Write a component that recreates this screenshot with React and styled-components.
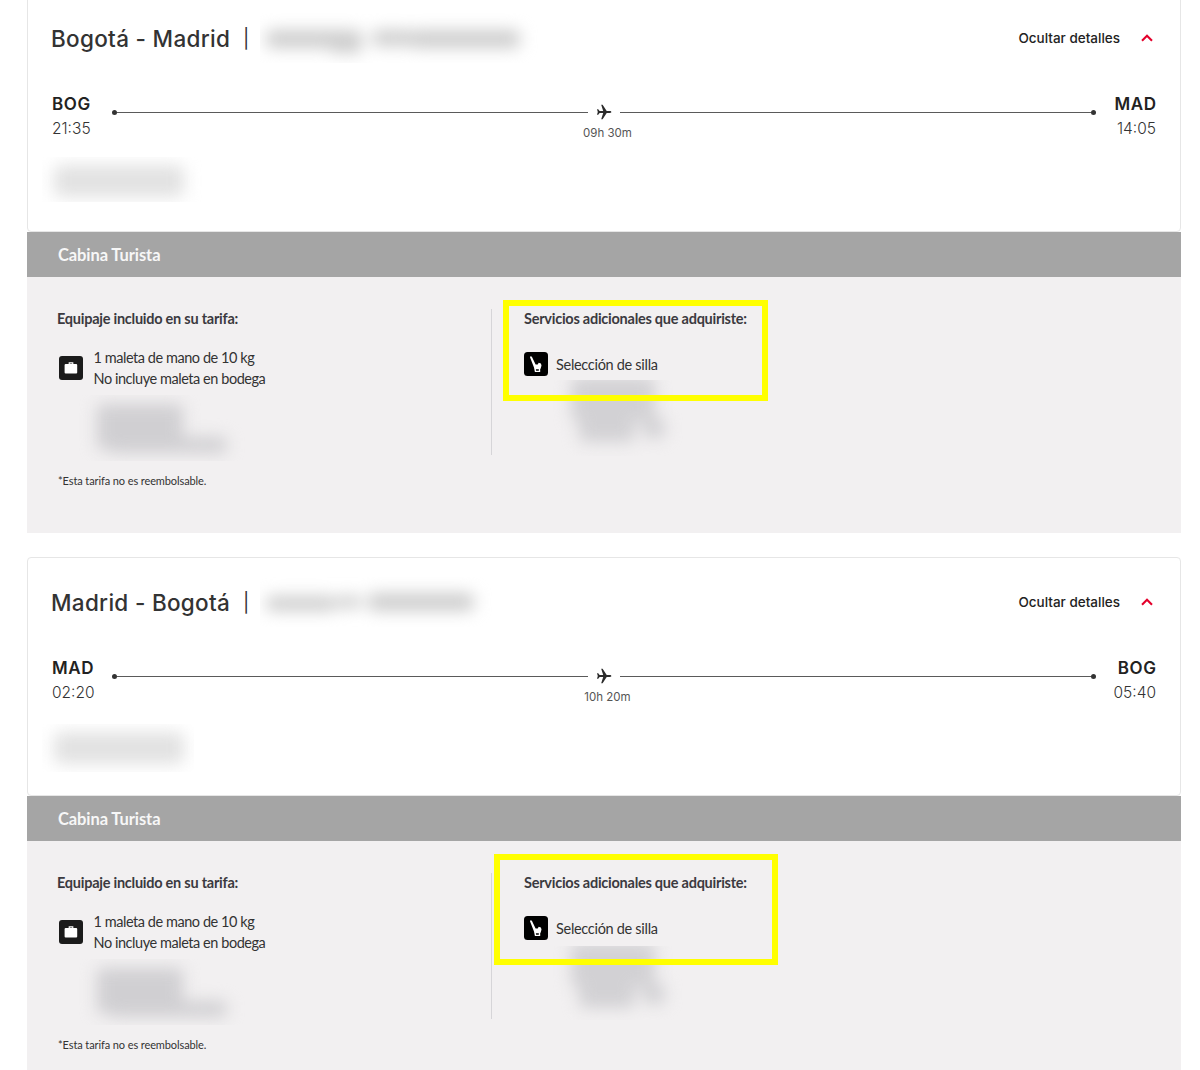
import React from 'react';
import styled, { createGlobalStyle } from 'styled-components';

const flights = [
  {
    title: 'Bogotá - Madrid',
    from: { code: 'BOG', time: '21:35' },
    to: { code: 'MAD', time: '14:05' },
    duration: '09h 30m',
    date: {
      bars: [
        [6, 17, 96, 18],
        [70, 22, 32, 18],
        [112, 17, 40, 16],
        [150, 17, 110, 18],
      ],
    },
    operator: { top: 11, left: -10, width: 160, height: 45 },
    services: { top: 70, height: 76 },
    highlight: { left: 12, top: 23, width: 265, height: 101 },
  },
  {
    title: 'Madrid - Bogotá',
    from: { code: 'MAD', time: '02:20' },
    to: { code: 'BOG', time: '05:40' },
    duration: '10h 20m',
    date: {
      bars: [
        [6, 19, 70, 15],
        [76, 19, 26, 12],
        [108, 16, 106, 18],
      ],
    },
    operator: { top: 14, left: -10, width: 152, height: 48 },
    services: { top: 72, height: 74 },
    highlight: { left: 3, top: 13, width: 284, height: 111 },
  },
];

const Redacted = ({ bars, $tone, ...box }) => (
  <RedactedBox {...box}>
    <Haze>
      {bars.map(([x, y, w, h], i) => (
        <Smudge key={i} $x={x} $y={y} $w={w} $h={h} $tone={$tone} />
      ))}
    </Haze>
  </RedactedBox>
);

const PlaneIcon = () => (
  <svg width="16" height="16" viewBox="0 0 16 16" fill="#2b2b2b">
    <path d="M15.3 8c0-.6-.6-.9-1.4-.9h-3.2L6.6.8H5.2l2 6.3H3.6L2.2 5.2H1L1.8 8 1 10.8h1.2l1.4-1.9h3.6l-2 6.3h1.4l4.1-6.3h3.2c.8 0 1.4-.3 1.4-.9z" />
  </svg>
);

const BagIcon = () => (
  <svg width="24" height="24" viewBox="0 0 24 24">
    <rect width="24" height="24" rx="3" fill="#1b1b1b" />
    <path d="M10.2 8.4V6.9h3.6v1.5" fill="none" stroke="#fff" strokeWidth="1.1" />
    <rect x="5.6" y="8" width="12.6" height="9.6" rx="1" fill="#fff" />
  </svg>
);

const SeatIcon = () => (
  <svg width="24" height="24" viewBox="0 0 24 24">
    <rect width="24" height="24" rx="3.5" fill="#000" />
    <path
      d="M6 5.2C6 4.2 7.4 4 8 5l3.6 7.400 2.100.2 1-1.800 2.200.6.600 2-.8 3.200-.5.3V20h-5.300l-.9-4.500z"
      fill="#fff"
    />
    <path d="M11.9 17.200h2.900v1.500h-2.700z" fill="#000" />
  </svg>
);

const Flight = ({ flight }) => (
  <Card>
    <Summary>
      <TitleRow>
        <Title>{flight.title}</Title>
        <Separator>|</Separator>
        <Redacted bars={flight.date.bars} $width={280} $height={50} $tone="#cdcdcd" />
        <Toggle>
          Ocultar detalles
          <svg width="12" height="8" viewBox="0 0 12 8">
            <path d="M1 6.7 6 1.7l5 5" fill="none" stroke="#e4002b" strokeWidth="2.1" />
          </svg>
        </Toggle>
      </TitleRow>
      <Route>
        <Place>
          <Code>{flight.from.code}</Code>
          <Time>{flight.from.time}</Time>
        </Place>
        <Track>
          <TrackLine>
            <Dot />
            <Line />
            <PlaneSlot>
              <PlaneIcon />
            </PlaneSlot>
            <Line />
            <Dot />
          </TrackLine>
          <Duration>{flight.duration}</Duration>
        </Track>
        <Place $end>
          <Code>{flight.to.code}</Code>
          <Time>{flight.to.time}</Time>
        </Place>
      </Route>
      <Redacted
        bars={[
          [12, 8, 130, 32],
        ]}
        $top={flight.operator.top}
        $left={flight.operator.left}
        $width={flight.operator.width}
        $height={flight.operator.height}
        $tone="#e2e2e2"
      />
    </Summary>
    <CabinBar>Cabina Turista</CabinBar>
    <Details>
      <Baggage>
        <ColumnTitle>Equipaje incluido en su tarifa:</ColumnTitle>
        <BaggageItem>
          <BagIcon />
          <div>
            <p>1 maleta de mano de 10 kg</p>
            <p>No incluye maleta en bodega</p>
          </div>
        </BaggageItem>
        <Redacted
          bars={[
            [20, 9, 86, 46],
            [32, 42, 118, 16],
          ]}
          $top={6}
          $left={20}
          $width={190}
          $height={66}
          $tone="#d0cfd2"
        />
        <Footnote>*Esta tarifa no es reembolsable.</Footnote>
      </Baggage>
      <Services>
        <ColumnTitle>Servicios adicionales que adquiriste:</ColumnTitle>
        <ServiceItem>
          <SeatIcon />
          <p>Selección de silla</p>
        </ServiceItem>
        <Redacted
          bars={[
            [26, -3, 84, 44],
            [34, 26, 56, 36],
            [98, 38, 22, 20],
          ]}
          $top={flight.services.top - 66}
          $left={21}
          $width={144}
          $height={flight.services.height}
          $tone="#d2d1d4"
        />
        <Highlight
          $left={flight.highlight.left}
          $top={flight.highlight.top}
          $width={flight.highlight.width}
          $height={flight.highlight.height}
        />
      </Services>
    </Details>
  </Card>
);

const App = () => {
  return (
    <>
      <GlobalStyle />
      <Page>
        {flights.map((flight) => (
          <Flight key={flight.title} flight={flight} />
        ))}
      </Page>
    </>
  );
};

const GlobalStyle = createGlobalStyle`
  * {
    box-sizing: border-box;
  }

  body {
    margin: 0;
    background: #fff;
  }

  h2, h3, p {
    margin: 0;
  }

  svg {
    display: block;
    flex: none;
  }
`;

const Page = styled.main`
  display: flex;
  flex-direction: column;
  gap: 24px;
  width: 1200px;
  height: 1070px;
  padding: 0 19px 0 27px;
  overflow: hidden;
  font-family: Lato, sans-serif;
  color: #333;
`;

const Card = styled.article`
  flex: none;

  &:first-child {
    margin-top: -7px;
  }
`;

const Summary = styled.div`
  height: 239px;
  padding: 0 24px;
  border: 1px solid #e6e6e6;
  border-radius: 4px;
  font-family: Inter, sans-serif;
`;

const TitleRow = styled.div`
  display: flex;
  align-items: center;
  height: 88px;
  margin: 0 0 1px -1px;
`;

const Title = styled.h2`
  width: 192px;
  font-size: 22.5px;
  font-weight: 500;
  letter-spacing: 0.3px;
  white-space: nowrap;
  color: #333;
`;

const Separator = styled.span`
  width: 17px;
  font-size: 19px;
  color: #333;
`;

const RedactedBox = styled.div`
  position: relative;
  flex: none;
  width: ${({ $width }) => $width}px;
  height: ${({ $height }) => $height}px;
  margin-top: ${({ $top = 0 }) => $top}px;
  margin-left: ${({ $left = 0 }) => $left}px;
  overflow: hidden;
`;

const Haze = styled.div`
  position: absolute;
  inset: 0;
  filter: blur(8px);
`;

const Smudge = styled.span`
  position: absolute;
  left: ${({ $x }) => $x}px;
  top: ${({ $y }) => $y}px;
  width: ${({ $w }) => $w}px;
  height: ${({ $h }) => $h}px;
  border-radius: 6px;
  background: ${({ $tone }) => $tone};
`;

const Toggle = styled.div`
  display: flex;
  align-items: center;
  gap: 21px;
  margin-left: auto;
  margin-right: 3px;
  font-size: 13.5px;
  font-weight: 500;
  white-space: nowrap;
  color: #222;
`;

const Route = styled.div`
  display: flex;
  padding-top: 9px;
`;

const Place = styled.div`
  width: 60px;
  text-align: ${({ $end }) => ($end ? 'right' : 'left')};
`;

const Code = styled.p`
  font-size: 17px;
  font-weight: 600;
  line-height: 24px;
  letter-spacing: 0.6px;
  margin-right: -0.6px;
  color: #222;
`;

const Time = styled.p`
  padding-top: 1px;
  font-size: 15.5px;
  font-weight: 300;
  line-height: 24px;
  color: #333;
`;

const Track = styled.div`
  flex: 1;
  padding-top: 12px;
`;

const TrackLine = styled.div`
  display: flex;
  align-items: center;
  height: 17px;
`;

const Dot = styled.span`
  width: 5px;
  height: 5px;
  border-radius: 50%;
  background: #333;
`;

const Line = styled.span`
  flex: 1;
  height: 1px;
  background: #5a5a5a;
`;

const PlaneSlot = styled.span`
  display: flex;
  justify-content: center;
  width: 32px;
  padding: 0 1px 1px 0;
`;

const Duration = styled.p`
  padding-left: 7px;
  font-size: 11.5px;
  font-weight: 400;
  line-height: 25px;
  text-align: center;
  color: #555;
`;

const CabinBar = styled.div`
  height: 45px;
  padding-left: 31px;
  font-size: 16.5px;
  font-weight: 700;
  line-height: 46px;
  letter-spacing: -0.1px;
  color: #f7f7f7;
  background: #a5a5a5;
`;

const Details = styled.div`
  display: grid;
  grid-template-columns: 464px 1fr;
  height: 256px;
  background: #f2f0f1;
`;

const Baggage = styled.section`
  padding: 32px 0 0 30px;
`;

const ColumnTitle = styled.h3`
  font-size: 14.5px;
  font-weight: 700;
  line-height: 20px;
  letter-spacing: -0.25px;
  color: #3b3a40;
`;

const BaggageItem = styled.div`
  display: flex;
  align-items: center;
  gap: 11px;
  margin-top: 18px;
  padding-left: 1.5px;
  font-size: 14.5px;
  line-height: 21px;
  letter-spacing: -0.45px;
`;

const Footnote = styled.p`
  margin-top: 10px;
  padding-left: 1px;
  font-size: 11px;
  line-height: 20px;
  letter-spacing: -0.1px;
`;

const Services = styled.section`
  position: relative;
  padding: 32px 0 0 33px;

  &::before {
    content: '';
    position: absolute;
    top: 32px;
    left: 0;
    width: 1px;
    height: 146px;
    background: #d6d5d8;
  }
`;

const ServiceItem = styled.div`
  display: flex;
  align-items: center;
  gap: 8px;
  margin-top: 23px;
  font-size: 14.5px;
  letter-spacing: -0.3px;
`;

/* frame that calls out the purchased services */
const Highlight = styled.span`
  position: absolute;
  left: ${({ $left }) => $left}px;
  top: ${({ $top }) => $top}px;
  width: ${({ $width }) => $width}px;
  height: ${({ $height }) => $height}px;
  border: 6px solid #ff0;
`;

export default App;
